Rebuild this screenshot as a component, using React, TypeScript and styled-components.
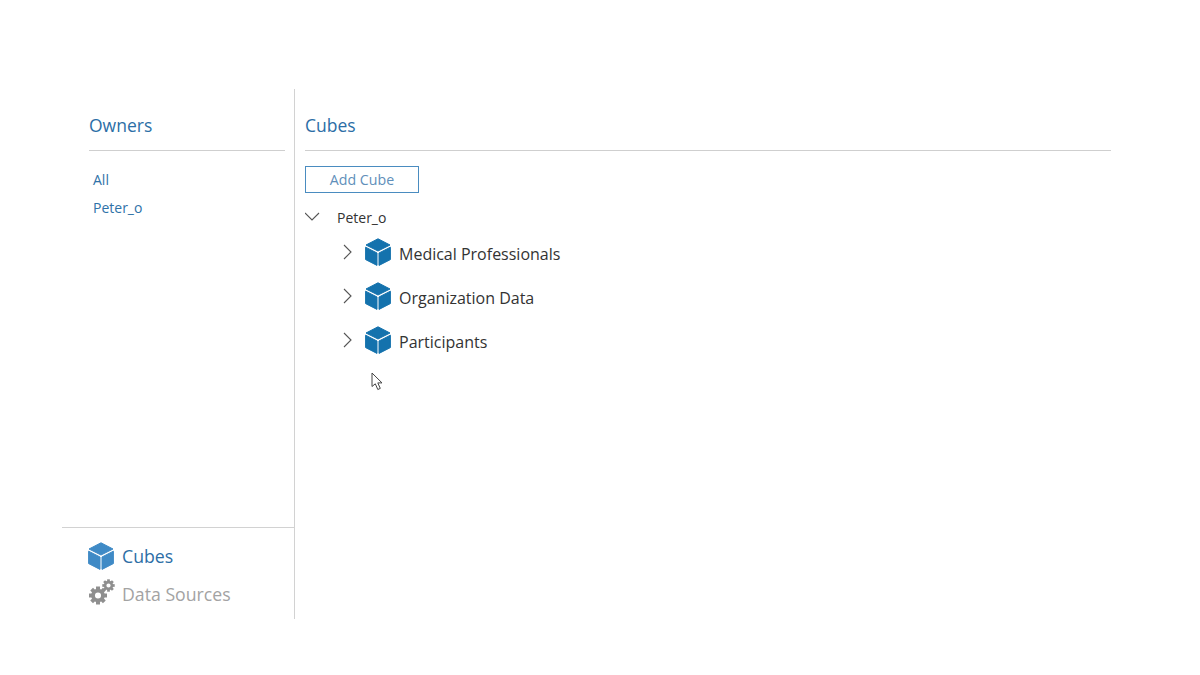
import React from "react";
import styled, { createGlobalStyle } from "styled-components";

const Global = createGlobalStyle`
  html, body { margin: 0; padding: 0; background: #fff; }
  body { font-family: "Open Sans", "Noto Sans", "Liberation Sans", sans-serif; }
`;

const Page = styled.div`
  width: 1200px;
  height: 675px;
  box-sizing: border-box;
  padding: 89px 89px 56px 62px;
  display: flex;
  position: relative;
  overflow: hidden;
`;

const Sidebar = styled.aside`
  width: 233px;
  flex: none;
  box-sizing: border-box;
  border-right: 1.5px solid #d2d2d2;
  display: flex;
  flex-direction: column;
`;

const OwnersPane = styled.div`
  flex: 1;
  padding: 0 9px 0 27px;
`;

const PaneTitle = styled.h2`
  margin: 0;
  height: 62px;
  box-sizing: border-box;
  padding-top: 25px;
  border-bottom: 1px solid #cfcfcf;
  font-size: 17.5px;
  line-height: 23px;
  font-weight: 400;
  color: #2c6ea6;
`;

const OwnerList = styled.ul`
  list-style: none;
  margin: 15px 0 0;
  padding: 0 0 0 4px;
`;

const OwnerItem = styled.li`
  font-size: 14px;
  line-height: 28px;
  color: #2f72a8;
`;

const Nav = styled.nav`
  height: 92px;
  box-sizing: border-box;
  border-top: 1px solid #d2d2d2;
  padding: 13px 0 0 26px;
  display: flex;
  flex-direction: column;
  gap: 8px;
`;

const NavItem = styled.div<{ $active?: boolean }>`
  display: flex;
  align-items: center;
  gap: 8px;
  height: 30px;
  font-size: 17.7px;
  color: ${(p) => (p.$active ? "#2c6ea6" : "#a3a3a3")};
`;

const Main = styled.main`
  flex: 1;
  padding-left: 10px;
`;

const AddButton = styled.button`
  display: block;
  margin: 15px 0 0;
  width: 114px;
  height: 27px;
  background: #fff;
  border: 1px solid #4a8cc0;
  padding: 0;
  font: inherit;
  font-size: 14.2px;
  color: #5f8fba;
`;

const OwnerRow = styled.div`
  display: flex;
  align-items: center;
  height: 24px;
  margin-top: 12px;
  font-size: 14px;
  color: #333;
`;

const OwnerCaret = styled.span`
  width: 32px;
  flex: none;
  display: flex;
  margin-top: -1px;
`;

const CubeList = styled.div`
  margin-top: 2px;
  padding-left: 35px;
  display: flex;
  flex-direction: column;
`;

const CubeRow = styled.div`
  display: flex;
  align-items: center;
  height: 44px;
  font-size: 16px;
  color: #333;
`;

const RowCaret = styled.span`
  width: 25px;
  flex: none;
  display: flex;
  margin-top: -2px;
`;

const CubeSlot = styled.span`
  display: flex;
  margin-top: -2px;
`;

const GearSlot = styled.span`
  display: flex;
  margin-top: -4px;
`;

const CubeLabel = styled.span`
  margin-left: 8px;
  padding-top: 2px;
`;

const Pointer = styled.svg`
  position: absolute;
  left: 371px;
  top: 372px;
`;

const Cube = ({ color }: { color: string }) => (
  <svg width="26" height="28" viewBox="0 0 26 28" fill={color} stroke={color} strokeWidth="1" strokeLinejoin="round">
    <path d="M13 0.8 L25 7 L13 13 L1 7 Z" />
    <path d="M0.6 9.2 L12 15 V27.4 L0.6 21.6 Z" />
    <path d="M25.4 9.2 L14 15 V27.4 L25.4 21.6 Z" />
  </svg>
);

const Gear = ({ cx, cy, r, teeth = 8 }: { cx: number; cy: number; r: number; teeth?: number }) => {
  const angles = Array.from({ length: teeth }, (_, i) => (i * 360) / teeth);
  return (
    <g>
      {angles.map((a) => (
        <rect
          key={a}
          x={cx - r * 0.22}
          y={cy - r}
          width={r * 0.44}
          height={r * 0.5}
          transform={`rotate(${a} ${cx} ${cy})`}
        />
      ))}
      <circle cx={cx} cy={cy} r={r * 0.55} fill="none" stroke="#8f8f8f" strokeWidth={r * 0.42} />
    </g>
  );
};

const Gears = () => (
  <svg width="26" height="26" viewBox="0 0 26 26" fill="#8f8f8f" overflow="visible">
    <Gear cx={10} cy={16.5} r={9} />
    <Gear cx={20.5} cy={6.5} r={6.2} />
  </svg>
);

const Chevron = ({ down }: { down?: boolean }) => (
  <svg width="16" height="16" viewBox="0 0 16 16" fill="none" stroke="#555" strokeWidth="1.1">
    <path d={down ? "M0 4 L7 11 L14 4" : "M4 1 L11 8 L4 15"} />
  </svg>
);

const cubes = ["Medical Professionals", "Organization Data", "Participants"];

export default function App() {
  return (
    <Page>
      <Global />
      <Sidebar>
        <OwnersPane>
          <PaneTitle>Owners</PaneTitle>
          <OwnerList>
            <OwnerItem>All</OwnerItem>
            <OwnerItem>Peter_o</OwnerItem>
          </OwnerList>
        </OwnersPane>
        <Nav>
          <NavItem $active>
            <Cube color="#3f8ac6" />
            Cubes
          </NavItem>
          <NavItem>
            <GearSlot>
              <Gears />
            </GearSlot>
            Data Sources
          </NavItem>
        </Nav>
      </Sidebar>
      <Main>
        <PaneTitle>Cubes</PaneTitle>
        <AddButton>Add Cube</AddButton>
        <OwnerRow>
          <OwnerCaret>
            <Chevron down />
          </OwnerCaret>
          Peter_o
        </OwnerRow>
        <CubeList>
          {cubes.map((name) => (
            <CubeRow key={name}>
              <RowCaret>
                <Chevron />
              </RowCaret>
              <CubeSlot>
                <Cube color="#1472ad" />
              </CubeSlot>
              <CubeLabel>{name}</CubeLabel>
            </CubeRow>
          ))}
        </CubeList>
      </Main>
      <Pointer width="14" height="20" viewBox="0 0 14 20" fill="#fff" stroke="#444" strokeWidth="1">
        <path d="M1 1 V14.5 L4.3 11.8 L6.8 17.5 L9.3 16.4 L6.8 10.9 L11 10.9 Z" />
      </Pointer>
    </Page>
  );
}
